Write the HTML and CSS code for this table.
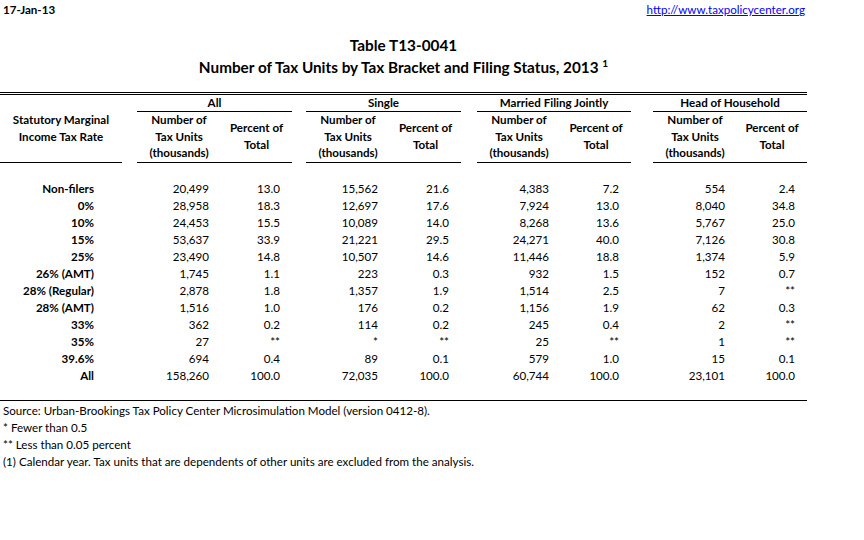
FILE: index.html
```html
<!DOCTYPE html>
<html>
<head>
<meta charset="utf-8">
<link rel="stylesheet" href="styles.css">
</head>
<body>
<div class="sheet">
  <div class="topbar">
    <span class="date">17-Jan-13</span>
    <a class="link" href="#">http://www.taxpolicycenter.org</a>
  </div>
  <div class="title">Table T13-0041</div>
  <div class="subtitle">Number of Tax Units by Tax Bracket and Filing Status, 2013 <sup>1</sup></div>
  <table class="data">
    <colgroup>
      <col class="c-label">
      <col class="c-sp1">
      <col class="c-num"><col class="c-pct">
      <col class="c-sp2">
      <col class="c-num"><col class="c-pct">
      <col class="c-sp3">
      <col class="c-num"><col class="c-pct2">
      <col class="c-sp4">
      <col class="c-num"><col class="c-pct2">
    </colgroup>
    <thead>
      <tr class="group">
        <th></th><th></th>
        <th colspan="2" class="g">All</th>
        <th></th>
        <th colspan="2" class="g">Single</th>
        <th></th>
        <th colspan="2" class="g">Married Filing Jointly</th>
        <th></th>
        <th colspan="2" class="g">Head of Household</th>
      </tr>
      <tr class="cols">
        <th class="u top">Statutory Marginal<br>Income Tax Rate</th>
        <th></th>
        <th class="u">Number of<br>Tax Units<br>(thousands)</th>
        <th class="u">Percent of<br>Total</th>
        <th></th>
        <th class="u">Number of<br>Tax Units<br>(thousands)</th>
        <th class="u">Percent of<br>Total</th>
        <th></th>
        <th class="u">Number of<br>Tax Units<br>(thousands)</th>
        <th class="u">Percent of<br>Total</th>
        <th></th>
        <th class="u">Number of<br>Tax Units<br>(thousands)</th>
        <th class="u">Percent of<br>Total</th>
      </tr>
    </thead>
    <tbody>
      <tr class="blank"><td colspan="13"></td></tr>
      <tr><th>Non-filers</th><td></td><td>20,499</td><td>13.0</td><td></td><td>15,562</td><td>21.6</td><td></td><td>4,383</td><td>7.2</td><td></td><td>554</td><td>2.4</td></tr>
      <tr><th>0%</th><td></td><td>28,958</td><td>18.3</td><td></td><td>12,697</td><td>17.6</td><td></td><td>7,924</td><td>13.0</td><td></td><td>8,040</td><td>34.8</td></tr>
      <tr><th>10%</th><td></td><td>24,453</td><td>15.5</td><td></td><td>10,089</td><td>14.0</td><td></td><td>8,268</td><td>13.6</td><td></td><td>5,767</td><td>25.0</td></tr>
      <tr><th>15%</th><td></td><td>53,637</td><td>33.9</td><td></td><td>21,221</td><td>29.5</td><td></td><td>24,271</td><td>40.0</td><td></td><td>7,126</td><td>30.8</td></tr>
      <tr><th>25%</th><td></td><td>23,490</td><td>14.8</td><td></td><td>10,507</td><td>14.6</td><td></td><td>11,446</td><td>18.8</td><td></td><td>1,374</td><td>5.9</td></tr>
      <tr><th>26% (AMT)</th><td></td><td>1,745</td><td>1.1</td><td></td><td>223</td><td>0.3</td><td></td><td>932</td><td>1.5</td><td></td><td>152</td><td>0.7</td></tr>
      <tr><th>28% (Regular)</th><td></td><td>2,878</td><td>1.8</td><td></td><td>1,357</td><td>1.9</td><td></td><td>1,514</td><td>2.5</td><td></td><td>7</td><td>**</td></tr>
      <tr><th>28% (AMT)</th><td></td><td>1,516</td><td>1.0</td><td></td><td>176</td><td>0.2</td><td></td><td>1,156</td><td>1.9</td><td></td><td>62</td><td>0.3</td></tr>
      <tr><th>33%</th><td></td><td>362</td><td>0.2</td><td></td><td>114</td><td>0.2</td><td></td><td>245</td><td>0.4</td><td></td><td>2</td><td>**</td></tr>
      <tr><th>35%</th><td></td><td>27</td><td>**</td><td></td><td>*</td><td>**</td><td></td><td>25</td><td>**</td><td></td><td>1</td><td>**</td></tr>
      <tr><th>39.6%</th><td></td><td>694</td><td>0.4</td><td></td><td>89</td><td>0.1</td><td></td><td>579</td><td>1.0</td><td></td><td>15</td><td>0.1</td></tr>
      <tr><th>All</th><td></td><td>158,260</td><td>100.0</td><td></td><td>72,035</td><td>100.0</td><td></td><td>60,744</td><td>100.0</td><td></td><td>23,101</td><td>100.0</td></tr>
    </tbody>
  </table>
  <div class="notes">
    <p>Source: Urban-Brookings Tax Policy Center Microsimulation Model (version 0412-8).</p>
    <p>* Fewer than 0.5</p>
    <p>** Less than 0.05 percent</p>
    <p>(1) Calendar year. Tax units that are dependents of other units are excluded from the analysis.</p>
  </div>
</div>
</body>
</html>
```

FILE: styles.css
```css
html, body {
  margin: 0;
  padding: 0;
  background: #ffffff;
}
body {
  font-family: Lato, "Noto Sans", sans-serif;
  font-size: 11.6px;
  color: #000000;
}
.sheet {
  width: 807px;
}
.topbar {
  display: flex;
  justify-content: space-between;
  align-items: center;
  height: 20px;
  line-height: 20px;
  padding: 0 2px 0 3px;
}
.date {
  font-weight: bold;
}
.link {
  color: #0000ff;
  text-decoration: underline;
}
.title, .subtitle {
  text-align: center;
  font-weight: bold;
  font-size: 15.3px;
  line-height: 22px;
}
.title {
  margin-top: 14px;
}
.subtitle sup {
  font-size: 10px;
  vertical-align: 6px;
  line-height: 0;
}
.data {
  margin-top: 14px;
  width: 807px;
  table-layout: fixed;
  border-collapse: separate;
  border-spacing: 0;
}
.c-label { width: 122px; }
.c-sp1 { width: 15px; }
.c-sp2 { width: 14px; }
.c-sp3 { width: 16px; }
.c-sp4 { width: 22px; }
.c-num { width: 84px; }
.c-pct { width: 71px; }
.c-pct2 { width: 70px; }
.data th, .data td {
  box-sizing: border-box;
  padding: 0;
  line-height: 17px;
  height: 17px;
  white-space: nowrap;
}
.data .group th {
  border-top: 3px double #000;
  font-weight: bold;
  text-align: center;
  line-height: 16px;
  height: 20px;
}
.data .group th.g {
  border-bottom: 1px solid #000;
}
.data .cols th {
  font-weight: bold;
  text-align: center;
  vertical-align: middle;
  line-height: 16.67px;
  height: 51px;
}
.data .cols th.u {
  border-bottom: 1px solid #000;
}
.data .cols th.top {
  vertical-align: top;
}
.data tbody th {
  text-align: right;
  font-weight: bold;
  padding-right: 28px;
}
.data tbody td {
  text-align: right;
  padding-right: 12px;
}
.notes {
  margin-top: 16px;
  border-top: 1px solid #000;
  padding-top: 1px;
}
.notes p {
  margin: 0;
  line-height: 17px;
  padding-left: 3px;
}
```
